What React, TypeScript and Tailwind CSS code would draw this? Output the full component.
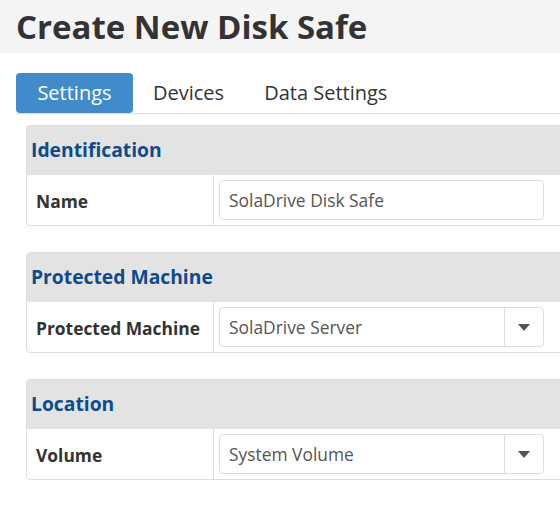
import React from "react";

function Caret() {
  return (
    <svg width="12" height="7" viewBox="0 0 12 7" className="block">
      <path d="M0 0 L12 0 L6 7 Z" fill="#555" />
    </svg>
  );
}

function Panel({ title, label, children }: { title: string; label: string; children: React.ReactNode }) {
  return (
    <div className="w-[560px] border border-[#dddddd] rounded-[4px] mb-[26px] overflow-hidden">
      <div className="h-[49px] bg-[#e3e3e3] px-[4px] pb-[2px] flex items-center">
        <span className="text-[19.3px] font-bold text-[#0d4b8e] leading-none">{title}</span>
      </div>
      <div className="h-[50px] flex items-stretch">
        <div className="w-[187px] border-r border-[#dddddd] pl-[9px] pt-[3px] flex items-center">
          <span className="text-[17.4px] font-bold text-[#333333] leading-none">{label}</span>
        </div>
        <div className="pl-[5px] flex items-center">{children}</div>
      </div>
    </div>
  );
}

function TextInput({ value }: { value: string }) {
  return (
    <div className="w-[325px] h-[40px] border border-[#dddddd] rounded-[4px] pl-[9px] pt-[2px] flex items-center bg-white">
      <span className="text-[17.4px] text-[#555555] leading-none">{value}</span>
    </div>
  );
}

function SelectInput({ value }: { value: string }) {
  return (
    <div className="w-[325px] h-[40px] border border-[#dddddd] rounded-[4px] flex items-stretch bg-white">
      <div className="flex-1 pl-[9px] pt-[2px] flex items-center">
        <span className="text-[17.4px] text-[#555555] leading-none">{value}</span>
      </div>
      <div className="w-[39px] border-l border-[#dddddd] flex items-center justify-center">
        <Caret />
      </div>
    </div>
  );
}

export default function App() {
  return (
    <div
      className="w-[560px] h-[505px] overflow-hidden bg-white"
      style={{ fontFamily: '"Open Sans", "Noto Sans", sans-serif' }}
    >
      <div className="h-[53px] bg-[#f4f4f4] pl-[16px] flex items-center">
        <h1 className="text-[33px] font-bold text-[#333333] leading-none">Create New Disk Safe</h1>
      </div>
      <div className="mt-[20px] ml-[16px] border-b border-[#dddddd] flex">
        <div className="h-[40px] w-[117px] flex items-center justify-center bg-[#428bca] rounded-[4px] text-white text-[20px]">
          Settings
        </div>
        <div className="h-[40px] px-[20px] flex items-center text-[#333333] text-[20px]">Devices</div>
        <div className="h-[40px] px-[20px] flex items-center text-[#333333] text-[20px]">Data Settings</div>
      </div>
      <div className="ml-[26px] mt-[11px]">
        <Panel title="Identification" label="Name">
          <TextInput value="SolaDrive Disk Safe" />
        </Panel>
        <Panel title="Protected Machine" label="Protected Machine">
          <SelectInput value="SolaDrive Server" />
        </Panel>
        <Panel title="Location" label="Volume">
          <SelectInput value="System Volume" />
        </Panel>
      </div>
    </div>
  );
}
